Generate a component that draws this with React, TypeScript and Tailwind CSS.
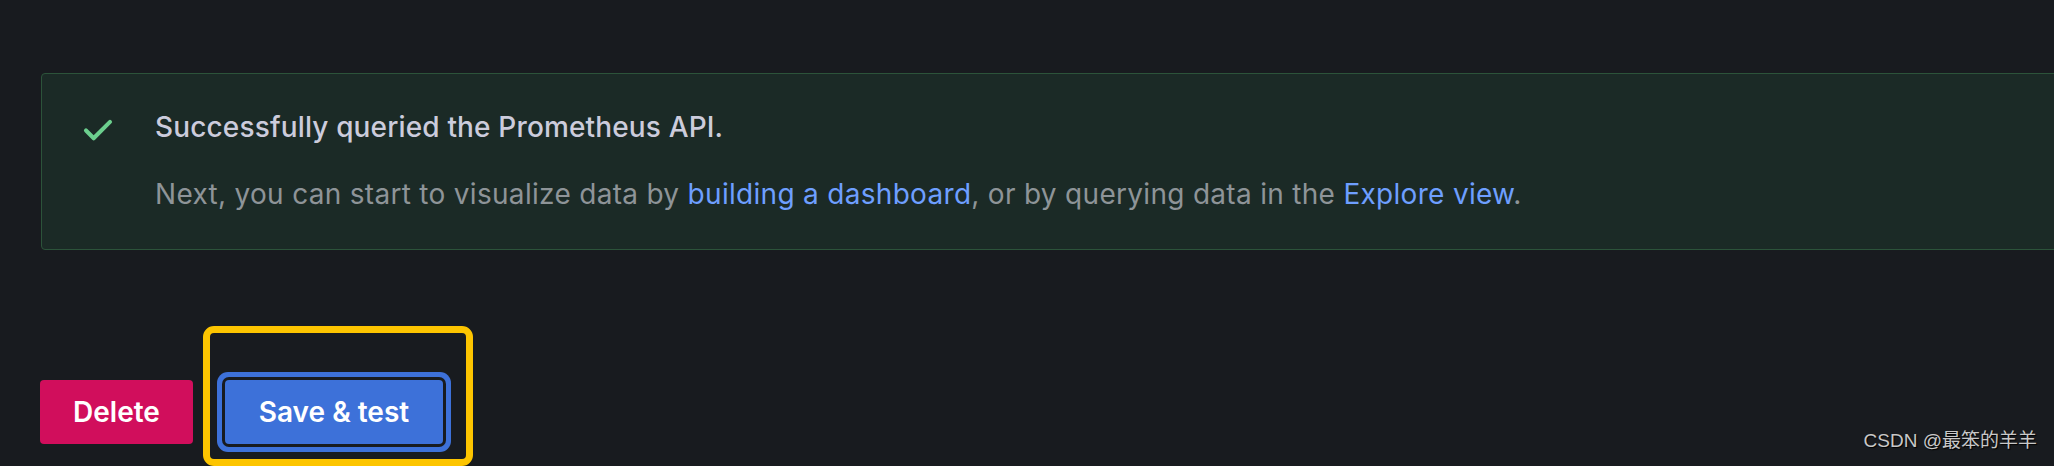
function SuccessAlert() {
  return (
    <div className="flex w-[2100px] rounded-[4px] border border-[#2c533a] bg-[#1b2a26] pl-[32px] pt-[32px] pb-[34px]">
      <div className="mr-[33px] h-[48px] w-[48px] shrink-0">
        <svg viewBox="0 0 24 24" className="h-[48px] w-[48px]" fill="#6ccf8e">
          <path d="M18.71,7.21a1,1,0,0,0-1.42,0L9.84,14.67,6.71,11.53A1,1,0,1,0,5.29,13l3.84,3.84a1,1,0,0,0,1.42,0l8.16-8.16A1,1,0,0,0,18.71,7.21Z" />
        </svg>
      </div>
      <div className="flex flex-col">
        <div className="text-[28px] leading-[42px] font-medium tracking-[0.15px] text-[#ccccdc]">
          Successfully queried the Prometheus API.
        </div>
        <div className="mt-[25px] text-[28px] leading-[42px] tracking-[0.3px] text-[#8e9498]">
          Next, you can start to visualize data by{" "}
          <a className="text-[#6e9fff]">building a dashboard</a>, or by querying
          data in the <a className="text-[#6e9fff]">Explore view</a>.
        </div>
      </div>
    </div>
  );
}

export default function App() {
  return (
    <div
      className="relative h-[466px] w-[2054px] overflow-hidden bg-[#181b1f]"
      style={{ fontFamily: "Inter, 'Noto Sans', sans-serif" }}
    >
      <div className="pl-[41px] pt-[73px]">
        <SuccessAlert />
      </div>

      <div className="mt-[130px] flex gap-[32px] pl-[40px]">
        <button className="flex h-[64px] w-[153px] items-center justify-center rounded-[4px] bg-[#d10e5c] text-[28px] font-semibold text-white">
          Delete
        </button>
        <button className="flex h-[64px] w-[218px] items-center justify-center rounded-[4px] bg-[#3d71d9] text-[28px] font-semibold text-white ring-[5px] ring-[#3d71d9] ring-offset-[3px] ring-offset-[#181b1f]">
          Save &amp; test
        </button>
      </div>

      {/* annotation box drawn over the screenshot */}
      <div className="absolute left-[203px] top-[326px] h-[140px] w-[270px] rounded-[11px] border-[7px] border-[#fdc500]" />

      <div
        className="absolute right-[17px] bottom-[11px] text-[19px] text-[#c8c8c8] [text-shadow:1px_1px_1px_#000]"
        style={{ fontFamily: "'Liberation Sans', 'Noto Sans CJK SC', sans-serif" }}
      >
        CSDN @最笨的羊羊
      </div>
    </div>
  );
}
